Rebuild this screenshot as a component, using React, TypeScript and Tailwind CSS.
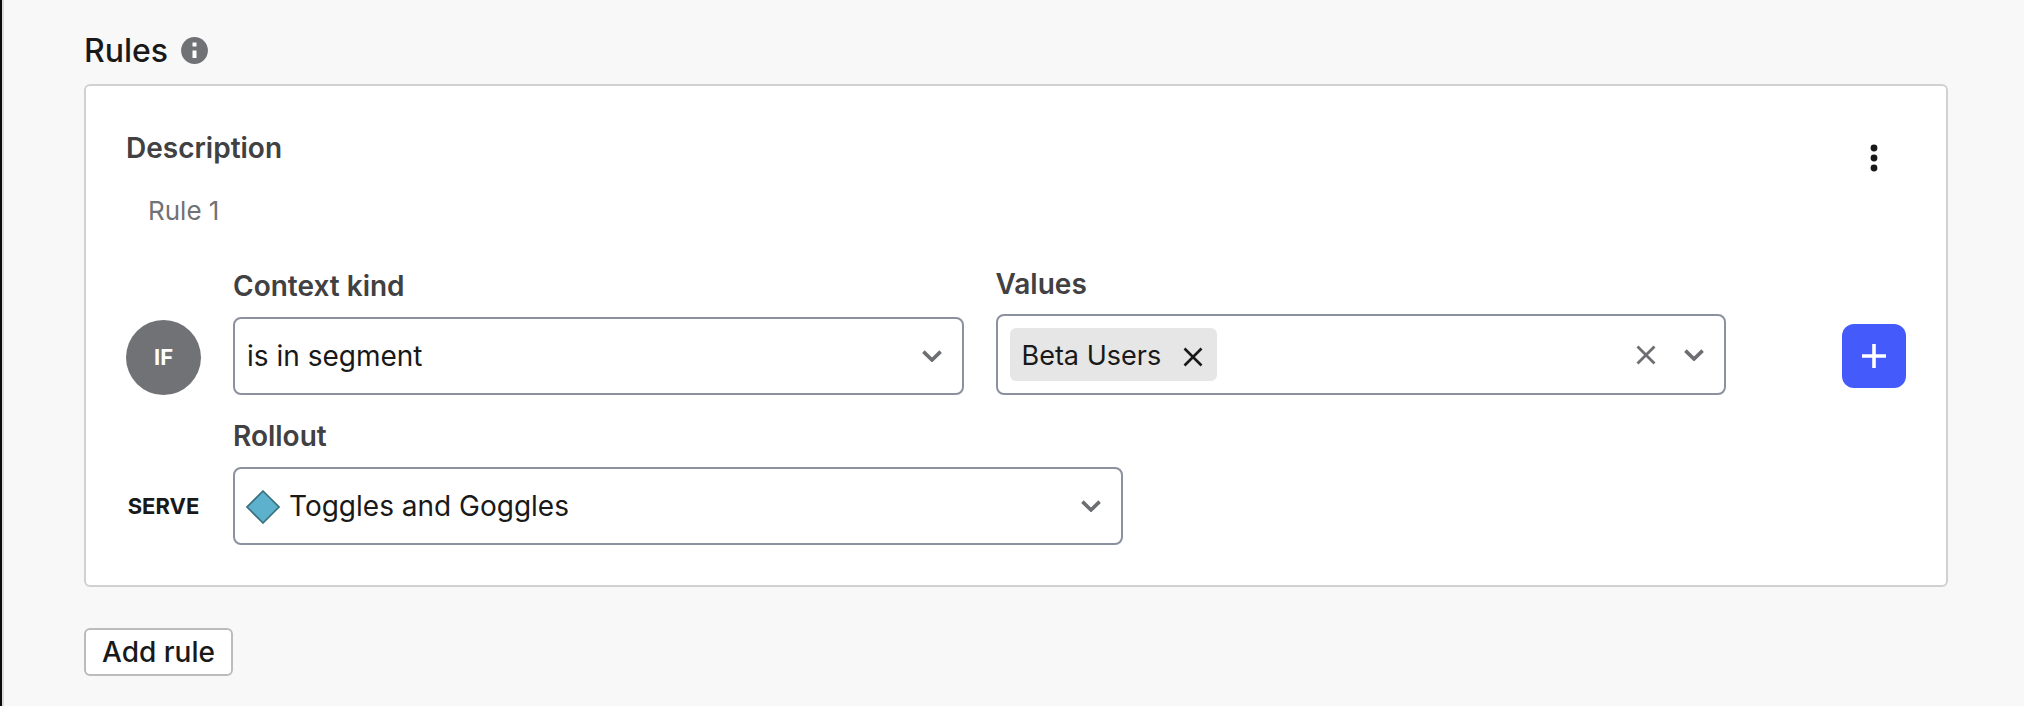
import type { ReactNode } from "react";

const labelClass = "text-[28px] leading-9 font-semibold text-[#414042]";
const controlBorder = "rounded-lg border-2 border-[#8b919e] bg-white";

function Chevron() {
  return (
    <svg width="20" height="12" viewBox="0 0 20 12" fill="none" stroke="#6d6e71" strokeWidth="3.6" aria-hidden="true">
      <path d="M1.4 1.6 10 10 18.6 1.6" />
    </svg>
  );
}

function Cross({ color, width }: { color: string; width: number }) {
  return (
    <svg width="20" height="20" viewBox="0 0 20 20" fill="none" stroke={color} strokeWidth={width} aria-hidden="true">
      <path d="M1.5 1.5 18.5 18.5M18.5 1.5 1.5 18.5" />
    </svg>
  );
}

function SelectField({ id, label, value, icon }: { id: string; label: string; value: string; icon?: ReactNode }) {
  return (
    <div className="flex flex-col gap-[13px]">
      <label htmlFor={id} className={`self-start ${labelClass}`}>
        {label}
      </label>
      <div className="relative">
        {icon && <span className="pointer-events-none absolute inset-y-0 left-[13px] flex items-center pt-0.5">{icon}</span>}
        <select
          id={id}
          defaultValue={value}
          className={`h-[78px] w-full appearance-none pr-14 text-[28px] text-[#191919] ${controlBorder} ${icon ? "pl-[54px]" : "pl-3"}`}
        >
          <option>{value}</option>
        </select>
        <span className="pointer-events-none absolute inset-y-0 right-[22px] flex items-center">
          <Chevron />
        </span>
      </div>
    </div>
  );
}

function ValuesField() {
  return (
    <div className="flex flex-col gap-3">
      <label htmlFor="values" className={`self-start ${labelClass}`}>
        Values
      </label>
      <div className={`flex h-[81px] items-center pr-5 pl-3 ${controlBorder}`}>
        <span className="flex h-[53px] shrink-0 items-center gap-[22px] rounded-md bg-[#e6e6e6] pt-0.5 pr-3.5 pl-3 text-[27px] leading-9 text-[#191919]">
          Beta Users
          <button type="button" aria-label="Remove Beta Users" className="pt-0.5">
            <Cross color="#191919" width={2.6} />
          </button>
        </span>
        <input id="values" type="text" className="ml-2 min-w-0 flex-1 text-[28px] outline-none" />
        <button type="button" aria-label="Clear values" className="mr-7">
          <Cross color="#6d6e71" width={2.8} />
        </button>
        <button type="button" aria-label="Show values">
          <Chevron />
        </button>
      </div>
    </div>
  );
}

export default function App() {
  return (
    <div className="min-h-screen border-l-2 border-[#0b0b0d] bg-[#f8f8f8] font-['Inter',sans-serif]">
      <main className="min-h-screen border-l-2 border-[#dcdcdc] pt-[31px] pr-[76px] pb-[29px] pl-20">
        <header className="mb-[13px] flex h-10 items-center gap-[13px]">
          <h2 className="text-[32px] leading-10 font-medium text-[#191919]">Rules</h2>
          <button type="button" aria-label="About rules" className="pb-0.5">
            <svg width="27" height="27" viewBox="0 0 27 27" aria-hidden="true">
              <circle cx="13.5" cy="13.5" r="13.4" fill="#717276" />
              <path d="M11.5 5.5h4v4h-4zM11.5 13.5h4v7.5h-4z" fill="#fff" />
            </svg>
          </button>
        </header>

        <section className="rounded-md border-2 border-[#d1d1d1] bg-white px-10 pt-11 pb-10">
          <div className="flex items-start justify-between">
            <div className="flex flex-col gap-[29px]">
              <label htmlFor="description" className={labelClass}>
                Description
              </label>
              <input
                id="description"
                type="text"
                defaultValue="Rule 1"
                className="h-8 pl-[22px] text-[26px] leading-8 text-[#717276] outline-none"
              />
            </div>
            <button type="button" aria-label="Rule actions" className="flex h-14 w-16 items-center justify-center">
              <svg width="8" height="28" viewBox="0 0 8 28" fill="#191919" aria-hidden="true">
                <circle cx="4" cy="4" r="3.4" />
                <circle cx="4" cy="14" r="3.4" />
                <circle cx="4" cy="24" r="3.4" />
              </svg>
            </button>
          </div>

          <div className="mt-[39px] flex items-end gap-8">
            <span className="flex size-[75px] shrink-0 items-center justify-center rounded-full bg-[#717276] text-[22px] font-bold text-white">
              IF
            </span>
            <div className="grid flex-1 grid-cols-2 items-end gap-8">
              <SelectField id="context-kind" label="Context kind" value="is in segment" />
              <ValuesField />
            </div>
            <div className="flex h-[78px] items-center pl-[84px]">
              <button
                type="button"
                aria-label="Add condition"
                className="flex size-16 items-center justify-center rounded-xl bg-[#455afa]"
              >
                <svg width="24" height="24" viewBox="0 0 24 24" stroke="#fff" strokeWidth="3.6" aria-hidden="true">
                  <path d="M12 0v24M0 12h24" />
                </svg>
              </button>
            </div>
          </div>

          <div className="mt-[23px] flex items-end gap-8">
            <span className="flex h-[78px] w-[75px] shrink-0 items-center justify-center text-[22px] font-bold text-[#191919]">
              SERVE
            </span>
            <div className="max-w-[890px] flex-1">
              <SelectField
                id="rollout"
                label="Rollout"
                value="Toggles and Goggles"
                icon={
                  <svg width="34" height="34" viewBox="0 0 34 34" aria-hidden="true">
                    <path d="M17 1 33 17 17 33 1 17Z" fill="#5db1cc" stroke="#38707f" strokeWidth="1.6" />
                  </svg>
                }
              />
            </div>
          </div>
        </section>

        <button
          type="button"
          className="mt-[41px] h-12 rounded-md border-2 border-[#bcbcbc] bg-white px-4 text-[28px] leading-none font-medium text-[#191919]"
        >
          Add rule
        </button>
      </main>
    </div>
  );
}
